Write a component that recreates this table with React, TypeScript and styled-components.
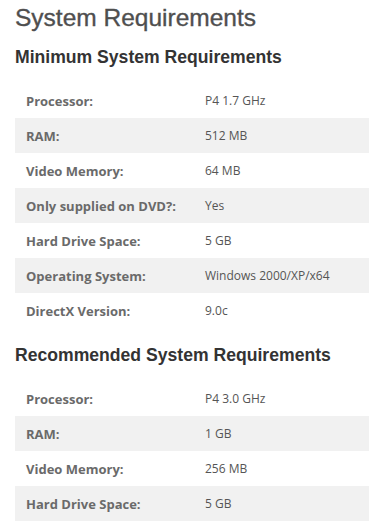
import React, { FC } from "react";
import styled, { createGlobalStyle } from "styled-components";

type Spec = { label: string; value: string };

const minimumSpecs: Spec[] = [
  { label: "Processor:", value: "P4 1.7 GHz" },
  { label: "RAM:", value: "512 MB" },
  { label: "Video Memory:", value: "64 MB" },
  { label: "Only supplied on DVD?:", value: "Yes" },
  { label: "Hard Drive Space:", value: "5 GB" },
  { label: "Operating System:", value: "Windows 2000/XP/x64" },
  { label: "DirectX Version:", value: "9.0c" },
];

const recommendedSpecs: Spec[] = [
  { label: "Processor:", value: "P4 3.0 GHz" },
  { label: "RAM:", value: "1 GB" },
  { label: "Video Memory:", value: "256 MB" },
  { label: "Hard Drive Space:", value: "5 GB" },
];

const GlobalStyle = createGlobalStyle`
  body {
    margin: 0;
    background: #fff;
    font-family: "Open Sans", "Liberation Sans", sans-serif;
  }
`;

const Page = styled.div`
  padding: 4px 0 0 15px;
  overflow: hidden;
`;

const Title = styled.h1`
  margin: 0;
  font-family: "Liberation Sans", Arial, sans-serif;
  font-size: 24.5px;
  font-weight: normal;
  line-height: 28px;
  color: #4f4f4f;
  -webkit-text-stroke: 0.35px #4f4f4f;
`;

const SectionTitle = styled.h2<{ $gap: number }>`
  margin: ${({ $gap }) => $gap}px 0 15px;
  font-family: "Liberation Sans", Arial, sans-serif;
  font-size: 17.6px;
  font-weight: bold;
  line-height: 21px;
  color: #333;
`;

const SpecTable = styled.div`
  display: flex;
  flex-direction: column;
  width: 354px;
`;

const Row = styled.div<{ $shaded: boolean }>`
  display: grid;
  grid-template-columns: 190px 1fr;
  height: 35px;
  align-items: center;
  background: ${({ $shaded }) => ($shaded ? "#f1f1f1" : "transparent")};
`;

const Label = styled.span`
  padding-left: 11px;
  font-size: 13px;
  font-weight: bold;
  color: #6a6a6a;
`;

const Value = styled.span`
  font-size: 12px;
  color: #555;
`;

const SpecList: FC<{ specs: Spec[] }> = ({ specs }) => (
  <SpecTable>
    {specs.map((spec, index) => (
      <Row key={index} $shaded={index % 2 === 1}>
        <Label>{spec.label}</Label>
        <Value>{spec.value}</Value>
      </Row>
    ))}
  </SpecTable>
);

export default function App() {
  return (
    <>
      <GlobalStyle />
      <Page>
        <Title>System Requirements</Title>
        <SectionTitle $gap={15}>Minimum System Requirements</SectionTitle>
        <SpecList specs={minimumSpecs} />
        <SectionTitle $gap={17}>Recommended System Requirements</SectionTitle>
        <SpecList specs={recommendedSpecs} />
      </Page>
    </>
  );
}
